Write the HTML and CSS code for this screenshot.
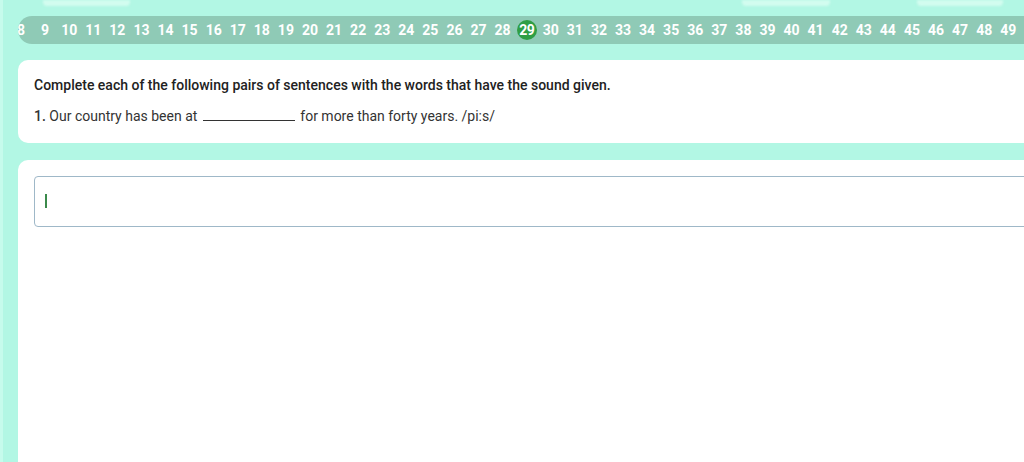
FILE: index.html
```html
<!DOCTYPE html>
<html lang="en">
    <head>
        <meta charset="utf-8">
        <title>Exercise 29</title>
        <link rel="stylesheet" href="styles.css">
    </head>
    <body>
        <div class="tabs">
            <span class="tab tab-a"></span>
            <span class="tab tab-b"></span>
            <span class="tab tab-c"></span>
        </div>

        <div class="page">
            <div class="pager">
                <ol class="pager-list" id="pager"></ol>
            </div>

            <div class="card question">
                <p class="instruction">Complete each of the following pairs of sentences with the words that have the sound given.</p>
                <p class="sentence"><b>1.</b> Our country has been at <span class="blank"></span> for more than forty years. /pi:s/</p>
            </div>

            <div class="card answer">
                <div class="answer-box"><span class="caret"></span></div>
            </div>
        </div>

        <script>
        var pager = document.getElementById('pager');
        for (var i = 8; i <= 49; i++) {
            var li = document.createElement('li');
            li.className = (i == 29) ? 'page-num current' : 'page-num';
            li.innerHTML = '<span>' + i + '</span>';
            pager.appendChild(li);
        }
        </script>
    </body>
</html>
```

FILE: styles.css
```css
body {
    margin: 0;
    height: 462px;
    display: flex;
    flex-direction: column;
    background: #b2f7e4;
    border-left: 3px solid #c6fbec;
    font-family: Roboto, "Liberation Sans", Arial, sans-serif;
    color: #222;
    overflow: hidden;
}

.tabs {
    display: flex;
    flex: none;
    height: 6px;
}

.tab {
    display: block;
    height: 6px;
    background: #d2fcef;
    border-radius: 0 0 4px 4px;
    filter: blur(1px);
}

.tab-a {
    margin-left: 40px;
    width: 87px;
}

.tab-b {
    margin-left: 612px;
    width: 88px;
}

.tab-c {
    margin-left: 87px;
    width: 86px;
}

.page {
    flex: 1;
    display: flex;
    flex-direction: column;
    min-height: 0;
    padding: 10px 0 0 15px;
}

.pager {
    flex: none;
    height: 28px;
    background: #8fcab6;
    border-radius: 14px 0 0 14px;
    overflow: hidden;
    margin-right: -20px;
}

.pager-list {
    display: flex;
    margin: 0 0 0 -9px;
    padding: 0;
    list-style: none;
}

.page-num {
    flex: none;
    width: 24.08px;
    height: 28px;
    display: flex;
    align-items: center;
    justify-content: center;
    color: #fff;
    font-size: 14px;
    font-weight: 700;
}

.page-num span {
    display: block;
    line-height: 20px;
}

.page-num.current span {
    width: 20px;
    height: 20px;
    border-radius: 50%;
    background: #2f9e45;
    text-align: center;
    letter-spacing: -0.5px;
}

.card {
    background: #fff;
    border-radius: 10px 0 0 10px;
    margin-right: -20px;
}

.question {
    flex: none;
    margin-top: 16px;
    height: 83px;
    padding: 0 16px;
    box-sizing: border-box;
    overflow: hidden;
}

.instruction {
    margin: 17px 0 0;
    font-size: 14px;
    font-weight: 500;
    line-height: 16px;
}

.sentence {
    margin: 15px 0 0;
    font-size: 14px;
    line-height: 16px;
    color: #333;
}

.sentence b {
    font-weight: 500;
}

.blank {
    display: inline-block;
    width: 92px;
    border-bottom: 1px solid #333;
    margin: 0 2px;
}

.answer {
    flex: 1;
    margin-top: 17px;
    padding: 16px 0 0 16px;
    border-radius: 10px 0 0 0;
}

.answer-box {
    height: 49px;
    border: 1px solid #9fb8c8;
    border-radius: 4px 0 0 4px;
    display: flex;
    align-items: center;
    padding-left: 10px;
}

.caret {
    display: block;
    width: 2px;
    height: 14px;
    background: #3b8a4b;
    margin-top: -2px;
}
```
